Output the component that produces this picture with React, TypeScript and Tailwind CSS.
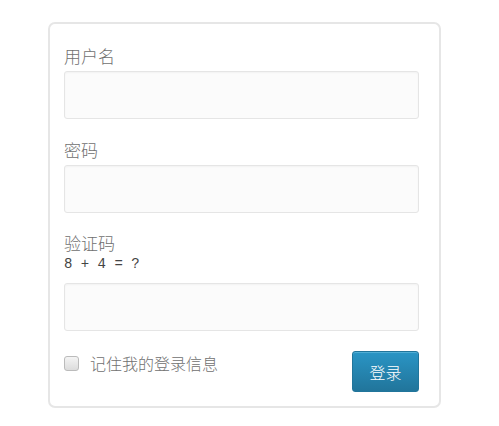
export default function App() {
  const font = { fontFamily: '"Noto Sans CJK SC", "Liberation Sans", sans-serif' };
  const field =
    "block w-[355px] h-[48px] bg-[#fbfbfb] border border-[#e5e5e5] rounded-[3px] shadow-[inset_0_1px_2px_rgba(0,0,0,0.04)]";
  return (
    <div className="w-[499px] h-[426px] bg-white pt-[22px] pl-[48px]" style={font}>
      <form className="w-[393px] h-[386px] border-2 border-[#e6e6e6] rounded-[7px] bg-white pt-[20px] px-[14px]">
        <label className="block text-[17px] leading-[24px] font-light text-[#707070]">用户名</label>
        <input className={`mt-[3px] ${field}`} />
        <label className="block mt-[19px] text-[17px] leading-[24px] font-light text-[#707070]">密码</label>
        <input type="password" className={`mt-[3px] ${field}`} />
        <label className="block mt-[18px] text-[17px] leading-[24px] font-light text-[#707070]">验证码</label>
        <div className="mt-[1px] text-[14px] leading-[16px] text-[#444]" style={{ fontFamily: '"Liberation Mono", monospace' }}>
          8 + 4 = ?
        </div>
        <input className={`mt-[11px] ${field}`} />
        <div className="mt-[20px] flex items-start justify-between w-[355px]">
          <label className="flex items-center gap-[11px] mt-[3px] text-[16px] leading-[18px] font-light text-[#707070]">
            <span className="block w-[15px] h-[15px] rounded-[3px] border border-[#bbb] bg-gradient-to-b from-[#f4f4f4] to-[#dcdcdc]" />
            记住我的登录信息
          </label>
          <button
            type="button"
            className="w-[67px] h-[41px] rounded-[3px] border border-[#21759b] bg-gradient-to-b from-[#2a95c5] to-[#21759b] text-white text-[16px] font-light shadow-[inset_0_1px_0_rgba(120,200,230,0.5)]"
          >
            登录
          </button>
        </div>
      </form>
    </div>
  );
}
